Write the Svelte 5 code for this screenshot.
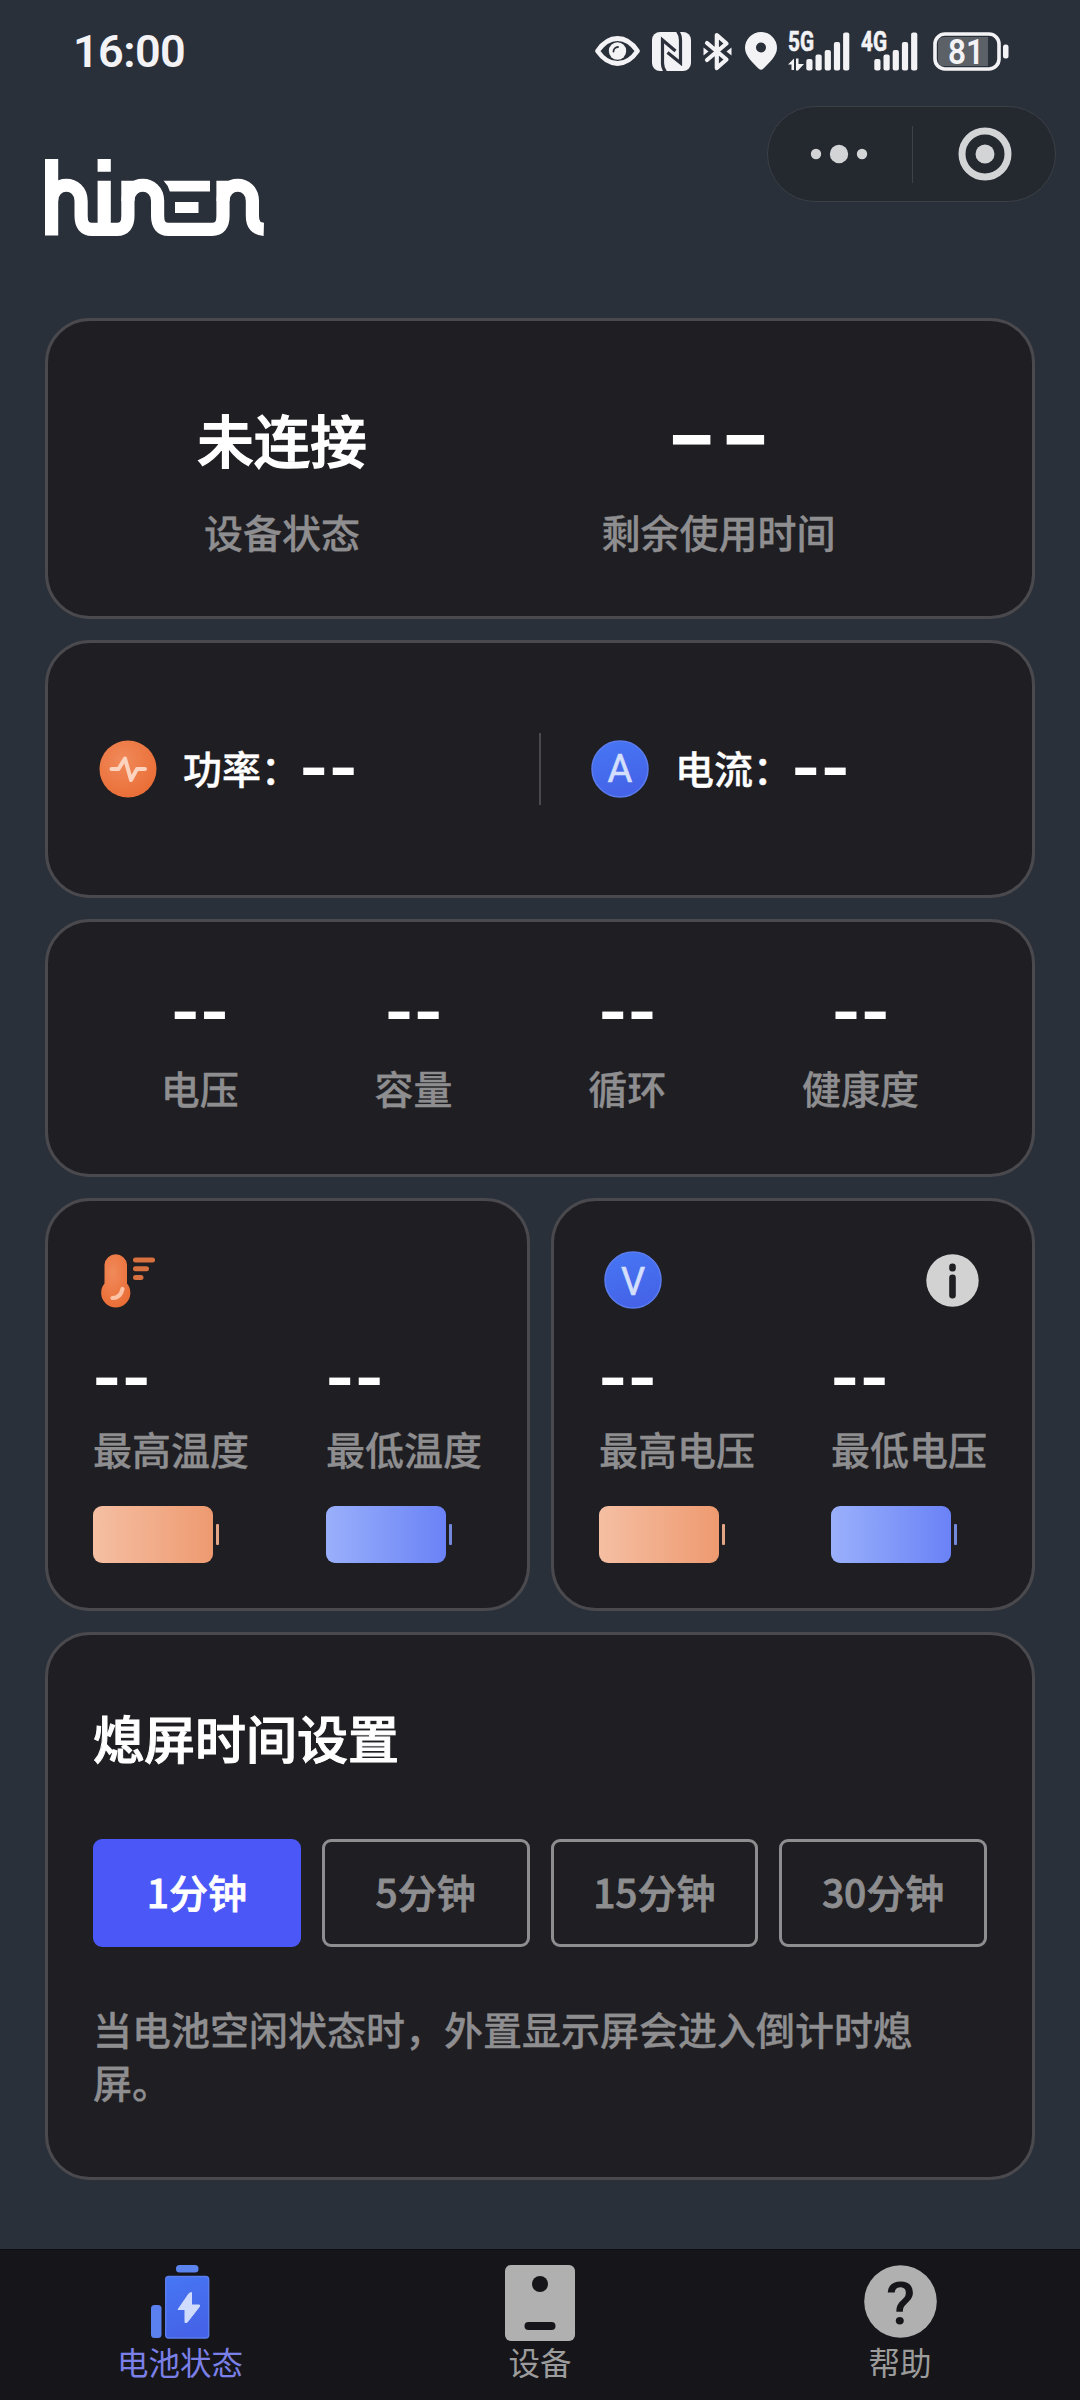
<script>
  let minutes = 1;

  const stats = ['电压', '容量', '循环', '健康度'];
  const options = [1, 5, 15, 30];
  const bars = [
    { x: 0, y: 27 },
    { x: 9.2, y: 22.5 },
    { x: 18.4, y: 18 },
    { x: 27.6, y: 10 },
    { x: 36.8, y: 0.5 },
  ];
  const tabs = [
    { id: 'battery', label: '电池状态' },
    { id: 'device', label: '设备' },
    { id: 'help', label: '帮助' },
  ];
  let currentTab = 'battery';
</script>

<div class="screen">
  <div class="status-bar">
    <span class="clock">16:00</span>
    <div class="status-icons">
      <svg class="eye" width="45" height="30" viewBox="0 0 45 30">
        <path d="M2.5 15C8 7 15 2.5 22.5 2.5S37 7 42.5 15C37 23 30 27.5 22.5 27.5S8 23 2.5 15Z" fill="none" stroke="#f3f3f6" stroke-width="4.8" stroke-linejoin="round" />
        <circle cx="22.5" cy="15" r="8.7" fill="#f3f3f6" />
        <path d="M18.5 15.5A4.5 4.5 0 0 1 23 11" fill="none" stroke="#2b303a" stroke-width="1.8" stroke-linecap="round" />
      </svg>
      <svg class="nfc" width="39" height="39" viewBox="0 0 39 39">
        <rect width="39" height="39" rx="8" fill="#f3f3f6" />
        <path d="M13.5 40Q10.5 36 10.5 31V8L23.5 19M25.5 -1Q28.5 3 28.5 8V31L15.5 20.5" fill="none" stroke="#2b303a" stroke-width="3.2" />
      </svg>
      <svg class="bluetooth" width="29" height="39" viewBox="0 0 29 39">
        <path d="M4 11L23.5 27.5L13.8 36V3L23.5 11.5L4 28" fill="none" stroke="#f3f3f6" stroke-width="4.2" stroke-linejoin="round" stroke-linecap="round" />
        <path d="M.5 15.5L5.5 19.5L.5 23.5ZM28.5 15.5L23.5 19.5L28.5 23.5Z" fill="#f3f3f6" />
      </svg>
      <svg class="pin" width="32" height="38" viewBox="0 0 32 38">
        <path fill-rule="evenodd" d="M16 0A16 16 0 0 1 32 16C32 24 24 31 18 37Q16 38.5 14 37C8 31 0 24 0 16A16 16 0 0 1 16 0ZM16 10.5A5 5 0 1 0 16 20.5A5 5 0 1 0 16 10.5Z" fill="#f3f3f6" />
      </svg>
      <svg class="signal" width="62" height="39" viewBox="0 0 62 39">
        <text x="0" y="19" class="net" textLength="26" lengthAdjust="spacingAndGlyphs">5G</text>
        <path d="M0 32.5L6 26.5V38H3.5V32.5ZM8 26.5H10.5V32L16 32L10 38.5H8Z" fill="#f3f3f6" />
        {#each bars as bar}
          <rect x={bar.x + 18.3} y={bar.y} width="6.2" height={38.5 - bar.y} rx="2" fill="#f3f3f6" />
        {/each}
      </svg>
      <svg class="signal" width="57" height="39" viewBox="0 0 57 39">
        <text x="0" y="19" class="net" textLength="26" lengthAdjust="spacingAndGlyphs">4G</text>
        {#each bars as bar}
          <rect x={bar.x + 13.3} y={bar.y} width="6.2" height={38.5 - bar.y} rx="2" fill="#f3f3f6" />
        {/each}
      </svg>
      <svg class="power" width="76" height="39" viewBox="0 0 76 39">
        <path d="M11 5H55V34H11Q5 34 5 28V11Q5 5 11 5Z" fill="#5c6067" />
        <rect x="2" y="2" width="64" height="35" rx="10" fill="none" stroke="#f3f3f6" stroke-width="3.6" />
        <rect x="70" y="12.5" width="5.5" height="14" rx="2.5" fill="#f3f3f6" />
        <text x="33" y="31.7" class="power-text" textLength="36" lengthAdjust="spacingAndGlyphs">81</text>
      </svg>
    </div>
  </div>

  <header>
    <svg class="logo" width="219" height="77" viewBox="0 0 219 77">
      <g fill="none" stroke="#fff" stroke-width="13.2">
        <path d="M6.6 0V76.5M59.2 0V12.8M59.2 21.8V70" />
        <path d="M6.6 42C6.6 21 36.1 21 36.1 42V57Q36.1 70.3 47 70.3H72Q82.9 70.3 82.9 57V21.8" />
        <path d="M82.9 42C82.9 21 112.6 21 112.6 42V57Q112.6 70.3 123.5 70.3H167Q178 70.3 178 57V21.8" />
        <path d="M178 42C178 21 207.4 21 207.4 42V57Q207.4 70 218.8 70.3" />
      </g>
      <path d="M118.6 21.8H165V32.5H124.8Q123 26 118.6 21.8ZM130 43H153.5V54H130Z" fill="#fff" />
    </svg>
    <div class="capsule">
      <svg width="56" height="20" viewBox="0 0 56 20" fill="#d3d4d6">
        <circle cx="5" cy="10" r="5.2" />
        <circle cx="28" cy="10" r="9.2" />
        <circle cx="51" cy="10" r="5.2" />
      </svg>
      <span class="capsule-line"></span>
      <svg width="54" height="54" viewBox="0 0 54 54">
        <circle cx="27" cy="27" r="23" fill="none" stroke="#d3d4d6" stroke-width="7" />
        <circle cx="27" cy="27" r="9.5" fill="#d3d4d6" />
      </svg>
    </div>
  </header>

  <main>
    <section class="card overview">
      <div class="cell">
        <strong class="state">未连接</strong>
        <span class="label">设备状态</span>
      </div>
      <div class="cell">
        <strong class="state dash-large">--</strong>
        <span class="label">剩余使用时间</span>
      </div>
    </section>

    <section class="card meters">
      <div class="meter">
        <svg width="58" height="58" viewBox="0 0 58 58">
          <defs>
            <radialGradient id="orange" cx=".4" cy=".35" r=".7">
              <stop offset="0" stop-color="#f08a5a" />
              <stop offset="1" stop-color="#ea6d35" />
            </radialGradient>
          </defs>
          <circle cx="29" cy="29" r="28.5" fill="url(#orange)" />
          <path d="M12.5 29H19.5L26 18.5L32 40L38 29H46" fill="none" stroke="#fbd3be" stroke-width="4" stroke-linecap="round" stroke-linejoin="round" />
        </svg>
        <span class="meter-name">功率：</span><span class="dash">--</span>
      </div>
      <div class="meter">
        <svg width="58" height="58" viewBox="0 0 58 58">
          <defs>
            <linearGradient id="blue" x1="0" y1="0" x2=".3" y2="1">
              <stop offset="0" stop-color="#4677f4" />
              <stop offset="1" stop-color="#4563e8" />
            </linearGradient>
          </defs>
          <circle cx="29" cy="29" r="28" fill="url(#blue)" stroke="#5a7ced" stroke-width="1.5" />
          <text x="29" y="41.5" class="badge-letter">A</text>
        </svg>
        <span class="meter-name">电流：</span><span class="dash">--</span>
      </div>
    </section>

    <section class="card stats">
      {#each stats as name}
        <div class="cell">
          <span class="dash">--</span>
          <span class="label">{name}</span>
        </div>
      {/each}
    </section>

    <div class="pair">
      <section class="card extreme">
        <div class="extreme-head">
          <svg width="58" height="58" viewBox="0 0 58 58">
            <path d="M6.5 13.5A11.3 11.3 0 0 1 29 13.5V32.5A14.6 14.6 0 1 1 6.5 32.5Z" fill="url(#orange)" />
            <path d="M14.5 47Q22.5 47 24.5 38" fill="none" stroke="#fdc3a6" stroke-width="4.2" stroke-linecap="round" />
            <path d="M37.5 9H54.5M37.5 17.8H48.5M37.5 26.5H43" stroke="#d9703f" stroke-width="5" stroke-linecap="round" />
          </svg>
        </div>
        <div class="extreme-row">
          <div class="extreme-item">
            <span class="dash">--</span>
            <span class="label">最高温度</span>
            <div class="cellbar hot"><i></i><b></b></div>
          </div>
          <div class="extreme-item">
            <span class="dash">--</span>
            <span class="label">最低温度</span>
            <div class="cellbar cold"><i></i><b></b></div>
          </div>
        </div>
      </section>

      <section class="card extreme">
        <div class="extreme-head">
          <svg width="58" height="58" viewBox="0 0 58 58">
            <circle cx="29" cy="29" r="28" fill="url(#blue)" stroke="#5a7ced" stroke-width="1.5" />
            <text x="29" y="43.5" class="badge-letter">V</text>
          </svg>
          <svg class="info" width="53" height="53" viewBox="0 0 53 53">
            <circle cx="26.5" cy="26.5" r="26.2" fill="#d2d2d2" />
            <rect x="23.2" y="9.5" width="6.6" height="8" rx="3.2" fill="#1f1e22" />
            <rect x="23.2" y="20.5" width="6.6" height="24" rx="3.2" fill="#1f1e22" />
          </svg>
        </div>
        <div class="extreme-row">
          <div class="extreme-item">
            <span class="dash">--</span>
            <span class="label">最高电压</span>
            <div class="cellbar hot"><i></i><b></b></div>
          </div>
          <div class="extreme-item">
            <span class="dash">--</span>
            <span class="label">最低电压</span>
            <div class="cellbar cold"><i></i><b></b></div>
          </div>
        </div>
      </section>
    </div>

    <section class="card settings">
      <h2>熄屏时间设置</h2>
      <div class="options">
        {#each options as option}
          <button type="button" class:active={option === minutes} on:click={() => (minutes = option)}>
            {option}分钟
          </button>
        {/each}
      </div>
      <p>当电池空闲状态时，外置显示屏会进入倒计时熄屏。</p>
    </section>
  </main>

  <nav>
    {#each tabs as tab}
      <div class="tab" class:active={tab.id === currentTab}>
        {#if tab.id === 'battery'}
          <svg width="60" height="76" viewBox="0 0 60 76">
            <rect x="26" y="0" width="22.5" height="7.5" rx="3.5" fill="#5b84ee" />
            <rect x="15.7" y="11.5" width="43" height="61.5" rx="3" fill="url(#blue)" stroke="#5a7ced" stroke-width="1.4" />
            <rect x="1" y="40" width="10.5" height="33" rx="3.5" fill="#5b80f0" />
            <path d="M39 28.5L28 44.5H35V57.5H37L49.5 41.5V40H41.5V27.5Z" fill="#d0dcfd" stroke="#d0dcfd" stroke-linejoin="round" />
          </svg>
        {:else if tab.id === 'device'}
          <svg width="70" height="76" viewBox="0 0 70 76">
            <rect width="70" height="76" rx="6" fill="#b0b0b0" />
            <circle cx="35" cy="19" r="8" fill="#161519" />
            <rect x="19.5" y="57" width="31" height="8" rx="4" fill="#161519" />
          </svg>
        {:else}
          <svg width="73" height="76" viewBox="0 0 73 76">
            <circle cx="36.5" cy="36.5" r="36.3" fill="#b0b0b0" />
            <text x="36.5" y="58.5" class="question">?</text>
          </svg>
        {/if}
        <span>{tab.label}</span>
      </div>
    {/each}
  </nav>
</div>

<style>
  :global(body) {
    margin: 0;
    background-color: #2a303a;
  }

  .screen {
    width: 1080px;
    height: 2400px;
    display: flex;
    flex-direction: column;
    overflow: hidden;
    background-color: #2a303a;
    color: #fff;
    font-family: 'Noto Sans CJK SC', sans-serif;
  }

  svg {
    display: block;
    flex: none;
    overflow: visible;
  }

  .status-bar {
    height: 102px;
    box-sizing: border-box;
    padding: 0 71px 0 73px;
    display: flex;
    align-items: center;
    justify-content: space-between;
  }

  .clock {
    color: #f3f3f6;
    font-family: Roboto, sans-serif;
    font-size: 45px;
    font-weight: 600;
    letter-spacing: -0.6px;
  }

  .status-icons {
    display: flex;
    align-items: center;
    gap: 12px;
  }

  .bluetooth {
    margin-right: 1px;
  }

  .pin {
    margin-right: -1px;
  }

  .signal + .power {
    margin-left: 3px;
  }

  .signal + .signal {
    margin-left: -1px;
  }

  .net {
    fill: #f3f3f6;
    stroke: #f3f3f6;
    stroke-width: 0.6px;
    font-family: Roboto, sans-serif;
    font-size: 27px;
    font-weight: 700;
  }

  .power-text {
    fill: #f3f3f6;
    font-family: Roboto, sans-serif;
    font-size: 35px;
    font-weight: 600;
    text-anchor: middle;
  }

  header {
    height: 216px;
    box-sizing: border-box;
    padding: 4px 24px 0 45px;
    display: flex;
    justify-content: space-between;
    align-items: flex-start;
  }

  .logo {
    margin-top: 53px;
  }

  .capsule {
    width: 289px;
    height: 96px;
    box-sizing: border-box;
    padding: 0 43px 0 43px;
    display: flex;
    align-items: center;
    justify-content: space-between;
    border: 1px solid #3b3f46;
    border-radius: 48px;
    background-color: #24282f;
  }

  .capsule-line {
    width: 1px;
    height: 57px;
    background-color: #3d4148;
  }

  main {
    margin: 0 45px;
    display: flex;
    flex-direction: column;
    gap: 21px;
  }

  .card {
    box-sizing: border-box;
    border: 3px solid #4a494d;
    border-radius: 45px;
    background-color: #1f1e22;
  }

  .label {
    color: #8e8e90;
    font-size: 39px;
    font-weight: 500;
    line-height: 52px;
    -webkit-text-stroke: 0.3px;
  }

  .cell {
    display: flex;
    flex-direction: column;
    align-items: center;
  }

  .dash {
    height: 50px;
    font-family: Inter, sans-serif;
    font-size: 63px;
    font-weight: 700;
    line-height: 50px;
  }

  .overview {
    height: 301px;
    padding: 78px 79px 0 32px;
    display: flex;
    justify-content: space-around;
  }

  .state {
    height: 106px;
    font-size: 56.5px;
    font-weight: 500;
    line-height: 79px;
    -webkit-text-stroke: 1.4px;
  }

  .dash-large {
    font-family: Inter, sans-serif;
    font-size: 117px;
    font-weight: 400;
    line-height: 69px;
    -webkit-text-stroke: 0;
  }

  .meters {
    height: 258px;
    display: grid;
    grid-template-columns: 491px 1fr;
    align-items: center;
  }

  .meter {
    height: 72px;
    padding-left: 51px;
    display: flex;
    align-items: center;
  }

  .meter + .meter {
    padding-left: 50px;
    border-left: 2px solid #4a494d;
  }

  .meter-name {
    margin: -4px 0 0 26px;
    font-size: 39px;
    font-weight: 500;
    -webkit-text-stroke: 0.4px;
  }

  .meter .dash {
    margin: -5px 0 0 -1px;
  }

  .stats {
    height: 258px;
    padding: 64px 45px 0;
    display: flex;
    justify-content: space-around;
  }

  .stats .dash {
    margin-bottom: 25px;
  }

  .pair {
    display: grid;
    grid-template-columns: 485px 484px;
    gap: 21px;
  }

  .extreme {
    height: 413px;
    padding: 50px 45px 0;
  }

  .extreme-head {
    padding: 0 8px 0 5px;
    display: flex;
    align-items: center;
    justify-content: space-between;
  }

  .extreme-row {
    margin-top: 43px;
    display: flex;
    justify-content: space-between;
  }

  .extreme-item {
    display: flex;
    flex-direction: column;
  }

  .extreme-item .dash {
    margin-left: -1px;
  }

  .extreme-item .label {
    margin: 20px 0 32px;
  }

  .cellbar {
    display: flex;
    align-items: center;
    gap: 3px;
  }

  .cellbar i {
    width: 120px;
    height: 57px;
    border-radius: 9px;
  }

  .cellbar b {
    width: 3px;
    height: 21px;
    border-radius: 1px;
  }

  .hot i {
    background: linear-gradient(90deg, #f5bfa3, #ee9a70);
  }

  .hot b {
    background-color: #e2a585;
  }

  .cold i {
    background: linear-gradient(90deg, #9ab0fb, #6a82f6);
  }

  .cold b {
    background-color: #7488dc;
  }

  .settings {
    height: 548px;
    padding: 68px 45px 0;
  }

  h2 {
    margin: 0 0 68px;
    font-size: 51px;
    font-weight: 500;
    line-height: 68px;
    -webkit-text-stroke: 1px;
  }

  .options {
    display: grid;
    grid-template-columns: repeat(4, 1fr);
    gap: 21px;
  }

  .options button {
    height: 108px;
    padding: 0 0 5px;
    border: 3px solid #8e8e90;
    border-radius: 9px;
    background: none;
    color: #8e8e90;
    font: 500 39px 'Noto Sans CJK SC', sans-serif;
    -webkit-text-stroke: 0.8px;
  }

  .options button.active {
    border-color: #4b57f7;
    background-color: #4b57f7;
    color: #fff;
  }

  p {
    margin: 55px 0 0;
    color: #8e8e90;
    font-size: 39px;
    font-weight: 500;
    line-height: 53px;
    -webkit-text-stroke: 0.3px;
  }

  nav {
    height: 151px;
    box-sizing: border-box;
    margin-top: auto;
    padding-top: 15px;
    display: grid;
    grid-template-columns: repeat(3, 1fr);
    border-top: 1px solid #0e0e11;
    background-color: #161519;
  }

  .tab {
    display: flex;
    flex-direction: column;
    align-items: center;
    color: #9c9c9c;
    font-size: 31.5px;
    line-height: 40px;
  }

  .tab.active {
    color: #7b80e8;
  }

  .badge-letter {
    fill: #d3dffc;
    stroke: #d3dffc;
    stroke-width: 0.6px;
    font-family: Roboto, sans-serif;
    font-size: 38px;
    font-weight: 400;
    text-anchor: middle;
  }

  .question {
    fill: #161519;
    font-family: Roboto, sans-serif;
    font-size: 60px;
    font-weight: 500;
    text-anchor: middle;
  }
</style>
